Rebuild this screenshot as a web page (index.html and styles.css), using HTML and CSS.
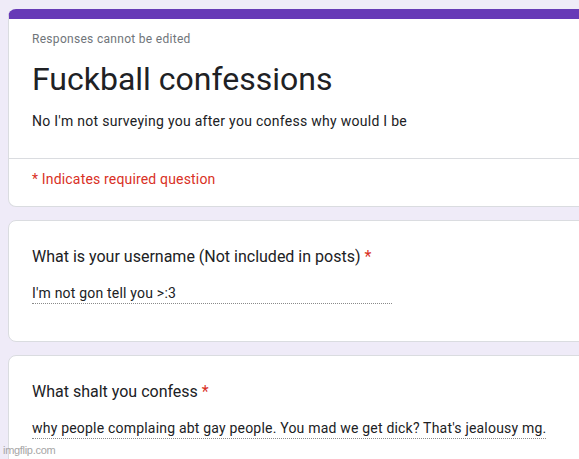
FILE: index.html
```html
<!DOCTYPE html>
<html>
<head>
    <title>Fuckball confessions</title>
    <link rel="stylesheet" href="styles.css">
</head>
<body>

<div class="form">

    <!-- Header card -->
    <div class="card header-card">
        <div class="header-top">
            <p class="note">Responses cannot be edited</p>
            <h1 class="title">Fuckball confessions</h1>
            <p class="desc">No I'm not surveying you after you confess why would I be</p>
        </div>
        <div class="header-bottom">
            <p class="required">* Indicates required question</p>
        </div>
    </div>

    <!-- Question 1 -->
    <div class="card question">
        <p class="q-title">What is your username (Not included in posts) <span class="star">*</span></p>
        <div class="answer short">I'm not gon tell you &gt;:3</div>
    </div>

    <!-- Question 2 -->
    <div class="card question">
        <p class="q-title">What shalt you confess <span class="star">*</span></p>
        <div class="answer long">why people complaing abt gay people. You mad we get dick? That's jealousy mg.</div>
    </div>

</div>

<p class="watermark">imgflip.com</p>

</body>
</html>
```

FILE: styles.css
```css
body {
    margin: 0;
    padding: 9px 0 0 8px;
    background-color: #efebf8;
    font-family: Roboto, "Liberation Sans", sans-serif;
    color: #202124;
    overflow: hidden;
    height: 459px;
    box-sizing: border-box;
    position: relative;
}

p {
    margin: 0;
}

.form {
    width: 640px;
    display: flex;
    flex-direction: column;
    gap: 13px;
}

.card {
    background-color: #fff;
    border: 1px solid #dadce0;
    border-radius: 8px;
}

/* Header card with purple band on top */
.header-card {
    border-top: 10px solid #673ab7;
}

.header-top {
    padding: 12px 24px 0 23px;
    height: 140px;
    box-sizing: border-box;
    border-bottom: 1px solid #dadce0;
}

.note {
    font-size: 12px;
    color: #70757a;
    line-height: 16px;
    letter-spacing: 0.3px;
}

.title {
    margin: 12px 0 0 0;
    font-size: 32px;
    font-weight: 400;
    line-height: 40px;
}

.desc {
    margin-top: 12px;
    font-size: 14px;
    line-height: 20px;
    letter-spacing: 0.28px;
}

.header-bottom {
    padding: 10px 24px 17px 23px;
}

.required {
    font-size: 14px;
    line-height: 20px;
    color: #d93025;
    letter-spacing: 0.17px;
}

/* Question cards */
.question {
    padding: 24px 24px 37px 23px;
    display: flex;
    flex-direction: column;
    align-items: flex-start;
}

.q-title {
    font-size: 16px;
    line-height: 24px;
}

.star {
    color: #d93025;
}

.answer {
    margin-top: 14px;
    font-size: 14px;
    line-height: 20px;
    border-bottom: 1px dotted #8a8a8a;
    letter-spacing: 0.2px;
}

.short {
    width: 360px;
}

.watermark {
    position: absolute;
    left: 3px;
    bottom: 3px;
    font-size: 11px;
    color: #a6a6a6;
    font-family: "Liberation Sans", sans-serif;
    letter-spacing: -0.3px;
}
```
